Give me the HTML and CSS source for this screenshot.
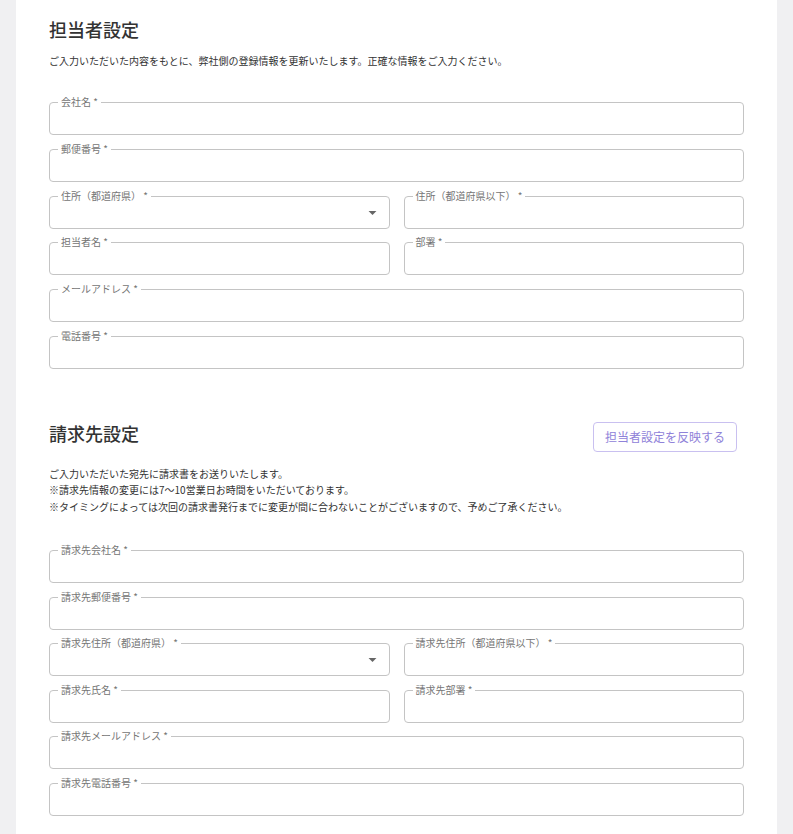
FILE: index.html
```html
<!DOCTYPE html>
<html lang="ja">
<head>
    <meta charset="UTF-8">
    <meta name="viewport" content="width=device-width, initial-scale=1.0">
    <title>担当者設定</title>
    <link rel="stylesheet" href="styles.css">
</head>
<body>
    <div class="page">
        <div class="card">
            <!-- 担当者設定 -->
            <section class="section">
                <div class="section-head">
                    <h2 class="section-title">担当者設定</h2>
                </div>
                <p class="section-desc">ご入力いただいた内容をもとに、弊社側の登録情報を更新いたします。正確な情報をご入力ください。</p>
                <div class="fields">
                    <div class="field"><span class="field-label">会社名 *</span></div>
                    <div class="field"><span class="field-label">郵便番号 *</span></div>
                    <div class="field-row">
                        <div class="field field-select">
                            <span class="field-label">住所（都道府県） *</span>
                            <svg class="select-arrow" viewBox="0 0 24 24"><path d="M7 10l5 5 5-5z"/></svg>
                        </div>
                        <div class="field"><span class="field-label">住所（都道府県以下） *</span></div>
                    </div>
                    <div class="field-row">
                        <div class="field"><span class="field-label">担当者名 *</span></div>
                        <div class="field"><span class="field-label">部署 *</span></div>
                    </div>
                    <div class="field"><span class="field-label">メールアドレス *</span></div>
                    <div class="field"><span class="field-label">電話番号 *</span></div>
                </div>
            </section>

            <!-- 請求先設定 -->
            <section class="section section-billing">
                <div class="section-head">
                    <h2 class="section-title">請求先設定</h2>
                    <button class="copy-button">担当者設定を反映する</button>
                </div>
                <p class="section-desc">ご入力いただいた宛先に請求書をお送りいたします。<br>※請求先情報の変更には7〜10営業日お時間をいただいております。<br>※タイミングによっては次回の請求書発行までに変更が間に合わないことがございますので、予めご了承ください。</p>
                <div class="fields">
                    <div class="field"><span class="field-label">請求先会社名 *</span></div>
                    <div class="field"><span class="field-label">請求先郵便番号 *</span></div>
                    <div class="field-row">
                        <div class="field field-select">
                            <span class="field-label">請求先住所（都道府県） *</span>
                            <svg class="select-arrow" viewBox="0 0 24 24"><path d="M7 10l5 5 5-5z"/></svg>
                        </div>
                        <div class="field"><span class="field-label">請求先住所（都道府県以下） *</span></div>
                    </div>
                    <div class="field-row">
                        <div class="field"><span class="field-label">請求先氏名 *</span></div>
                        <div class="field"><span class="field-label">請求先部署 *</span></div>
                    </div>
                    <div class="field"><span class="field-label">請求先メールアドレス *</span></div>
                    <div class="field"><span class="field-label">請求先電話番号 *</span></div>
                </div>
            </section>
        </div>
    </div>
</body>
</html>
```

FILE: styles.css
```css
body {
    margin: 0;
    padding: 0;
    background-color: #f0f0f2;
    font-family: "Noto Sans CJK JP", "Noto Sans", sans-serif;
    color: #333;
}

.page {
    padding: 0 16px;
}

.card {
    background-color: #fff;
    padding: 16px 33px 40px;
    min-height: 900px;
}

.section-head {
    display: flex;
    justify-content: space-between;
    align-items: flex-start;
}

.section-title {
    margin: 0;
    font-size: 18px;
    line-height: 26px;
    font-weight: 500;
    color: #333;
}

.section-desc {
    margin: 11px 0 0;
    font-size: 10px;
    line-height: 16px;
    color: #333;
}

.fields {
    display: flex;
    flex-direction: column;
    gap: 13.8px;
    margin-top: 33px;
}

.field-row {
    display: grid;
    grid-template-columns: 1fr 1fr;
    gap: 14px;
}

.field {
    position: relative;
    height: 33px;
    box-sizing: border-box;
    border: 1px solid #c4c4c4;
    border-radius: 4px;
}

/* label sits on the top border like an outlined input */
.field-label {
    position: absolute;
    top: -7px;
    left: 8px;
    padding: 0 3px;
    background-color: #fff;
    font-size: 10px;
    line-height: 12px;
    color: #757575;
    white-space: nowrap;
}

.field-select {
    display: flex;
    align-items: center;
    justify-content: flex-end;
    padding-right: 7px;
}

.select-arrow {
    width: 19px;
    height: 19px;
    fill: #666;
}

.section-billing {
    margin-top: 51px;
}

.section-billing .section-head {
    height: 32px;
}

.section-billing .section-desc {
    margin-top: 14px;
    line-height: 16.5px;
}

.section-billing .fields {
    margin-top: 34.5px;
    gap: 13.6px;
}

.copy-button {
    margin: 2px 7px 0 0;
    width: 144px;
    height: 30px;
    box-sizing: border-box;
    background-color: #fff;
    border: 1px solid #c9c0f0;
    border-radius: 4px;
    font-family: inherit;
    font-size: 12px;
    color: #8f82d9;
    cursor: pointer;
}
```
